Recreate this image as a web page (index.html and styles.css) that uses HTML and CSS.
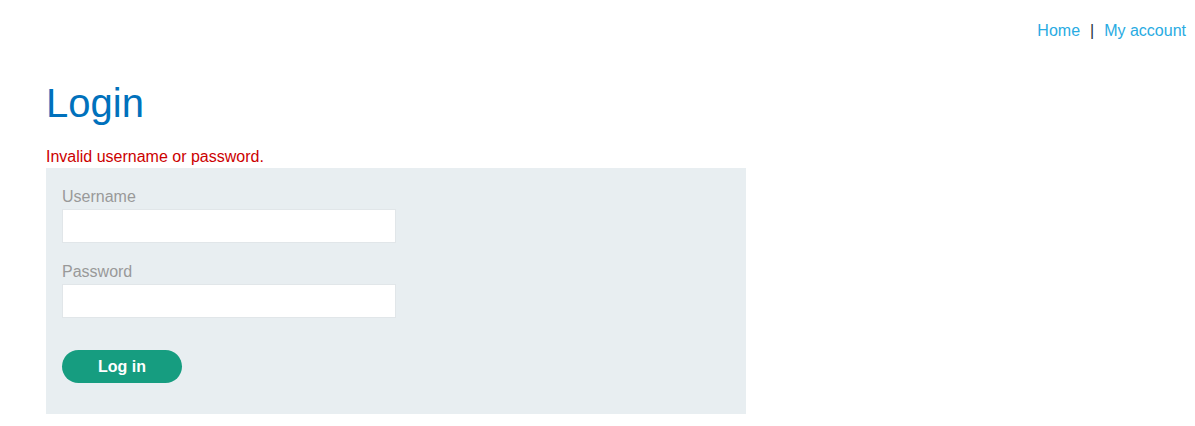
FILE: index.html
```html
<!DOCTYPE html>
<html lang="en">
<head>
  <meta charset="UTF-8" />
  <meta name="viewport" content="width=device-width, initial-scale=1.0" />
  <title>Login</title>
  <link rel="stylesheet" href="styles.css">
</head>
<body>
  <header class="top-links">
    <a href="#">Home</a>
    <span class="sep">|</span>
    <a href="#">My account</a>
  </header>

  <main class="container">
    <h1>Login</h1>
    <p class="error">Invalid username or password.</p>

    <form class="login-form">
      <label for="username">Username</label>
      <input type="text" id="username" name="username" />

      <label for="password">Password</label>
      <input type="password" id="password" name="password" />

      <button type="submit">Log in</button>
    </form>
  </main>
</body>
</html>
```

FILE: styles.css
```css
body {
  margin: 0;
  font-family: 'Liberation Sans', Arial, sans-serif;
  font-size: 16px;
  background: #fff;
  color: #333;
}
.top-links {
  display: flex;
  justify-content: flex-end;
  align-items: center;
  gap: 10px;
  padding: 22px 9px 0 0;
  line-height: 18px;
}
.top-links a {
  color: #29abe2;
  text-decoration: none;
}
.top-links .sep {
  color: #29303b;
}
.container {
  padding: 0 46px;
}
h1 {
  margin: 40px 0 0;
  font-size: 40px;
  font-weight: normal;
  line-height: 46px;
  color: #0071bc;
}
.error {
  margin: 21px 0 1px;
  line-height: 20px;
  color: #c00;
}
.login-form {
  display: flex;
  flex-direction: column;
  align-items: flex-start;
  width: 700px;
  box-sizing: border-box;
  background: #e8eef1;
  padding: 19px 16px 31px;
}
.login-form label {
  color: #999;
  line-height: 20px;
  margin-bottom: 2px;
}
.login-form input {
  width: 334px;
  height: 34px;
  box-sizing: border-box;
  border: 1px solid #e1e6e9;
  background: #fff;
  margin: 0 0 19px;
  padding: 0 8px;
  font: inherit;
}
.login-form input:last-of-type {
  margin-bottom: 32px;
}
.login-form button {
  width: 120px;
  height: 33px;
  border: none;
  border-radius: 17px;
  background: #169d80;
  color: #fff;
  font: bold 16px 'Liberation Sans', Arial, sans-serif;
  cursor: pointer;
}
```
